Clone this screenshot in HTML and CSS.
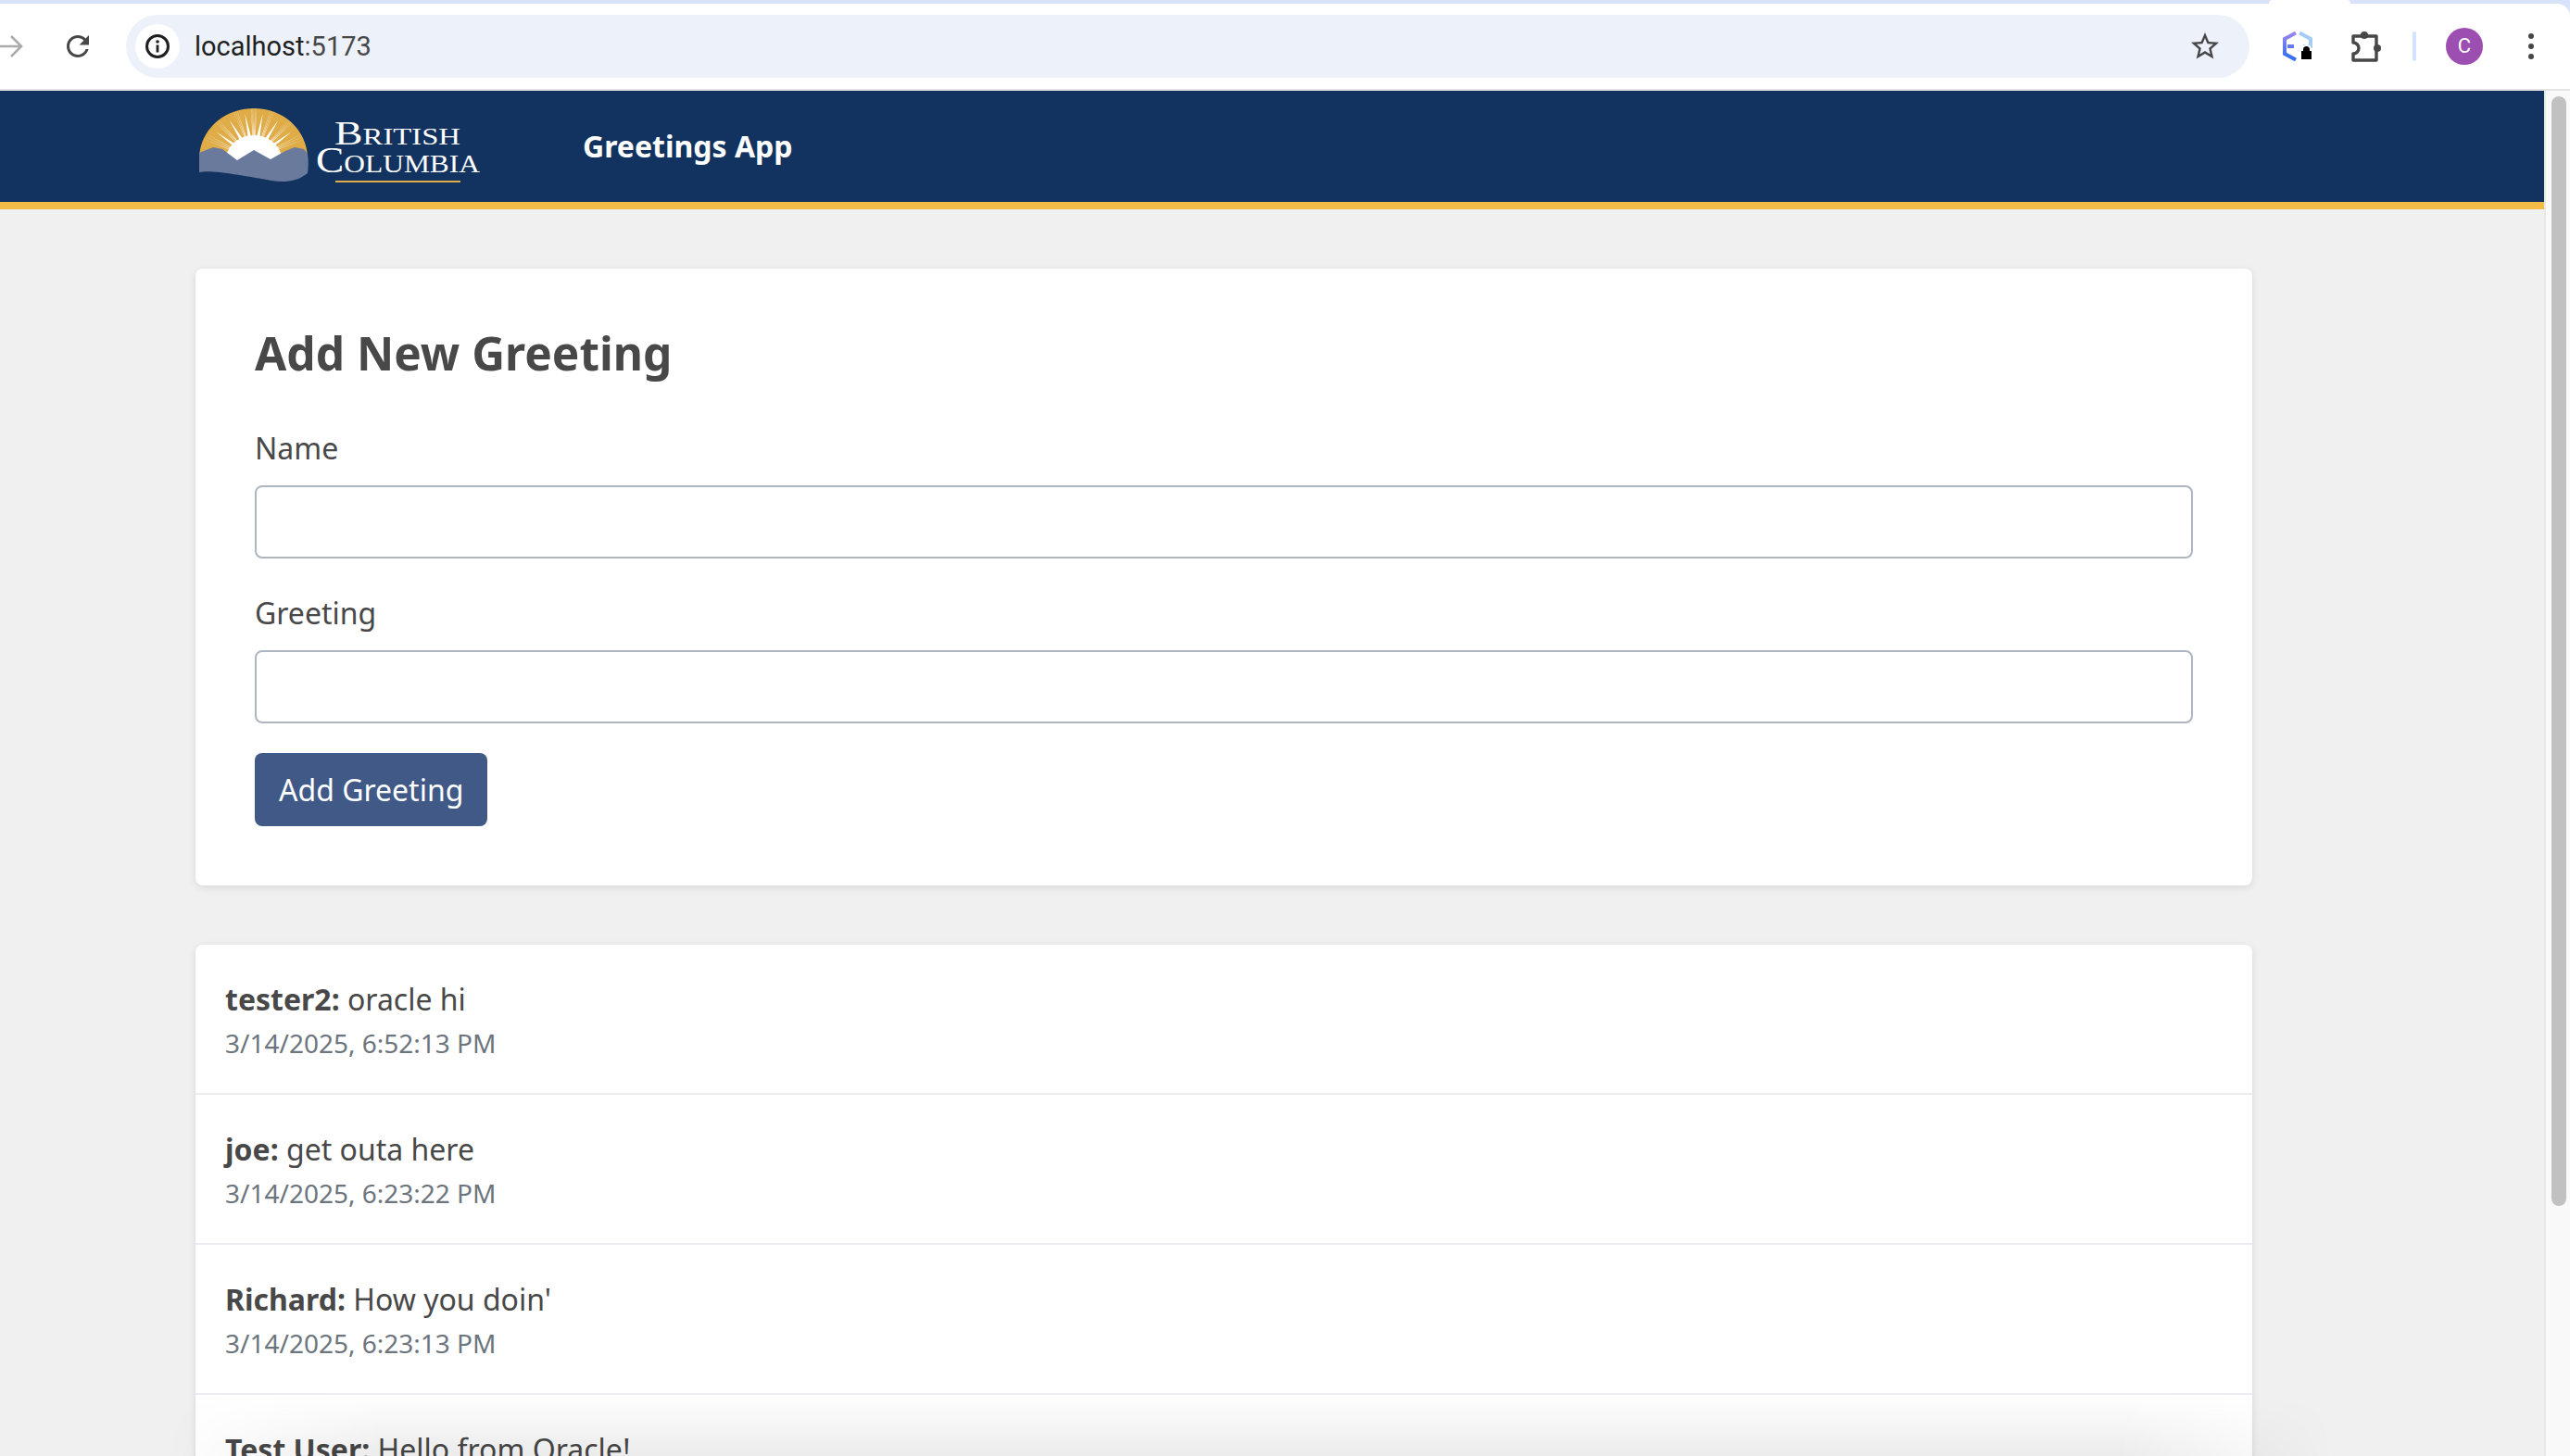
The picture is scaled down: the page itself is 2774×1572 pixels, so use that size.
FILE: index.html
```html
<!DOCTYPE html>
<html lang="en">
<head>
    <meta charset="UTF-8">
    <title>Greetings App</title>
    <link rel="stylesheet" href="styles.css">
</head>
<body>
    <div class="browser">
        <div class="tab-strip"><div class="active-tab"></div></div>
        <div class="toolbar">
            <svg class="forward" width="26" height="28" viewBox="0 0 26 28"><path d="M-6 14H23M12 3l11 11-11 11" fill="none" stroke="#ababab" stroke-width="2.6"/></svg>
            <svg class="reload" width="36" height="36" viewBox="0 0 24 24"><path fill="#474747" d="M17.65 6.35C16.2 4.9 14.21 4 12 4c-4.42 0-7.99 3.58-7.99 8s3.57 8 7.99 8c3.73 0 6.84-2.55 7.73-6h-2.08c-.82 2.33-3.04 4-5.65 4-3.31 0-6-2.69-6-6s2.69-6 6-6c1.66 0 3.14.69 4.22 1.78L13 11h7V4l-2.35 2.35z"/></svg>
            <div class="address-bar">
                <div class="site-chip">
                    <svg width="30" height="30" viewBox="0 0 30 30"><circle cx="15" cy="15" r="11.5" fill="none" stroke="#1f1f1f" stroke-width="3"/><rect x="13.6" y="13.5" width="2.8" height="8" fill="#1f1f1f"/><circle cx="15" cy="10" r="1.8" fill="#1f1f1f"/></svg>
                </div>
                <span class="url">localhost<span class="url-port">:5173</span></span>
                <svg class="star" width="36" height="36" viewBox="0 0 24 24"><path fill="#474747" d="M22 9.24l-7.19-.62L12 2 9.19 8.63 2 9.24l5.46 4.73L5.82 21 12 17.27 18.18 21l-1.63-7.03L22 9.24zM12 15.4l-3.76 2.27 1-4.28-3.32-2.88 4.38-.38L12 6.1l1.71 4.04 4.38.38-3.32 2.88 1 4.28L12 15.4z"/></svg>
            </div>
            <svg class="ext-icon" width="36" height="36" viewBox="0 0 36 36">
                <defs><linearGradient id="extLeft" x1="0" y1="0" x2="0" y2="1"><stop offset="0" stop-color="#9a86f0"/><stop offset="1" stop-color="#2f6cf2"/></linearGradient></defs>
                <path d="M16 3.500L4 10V26L16 32.500M7 18H14" fill="none" stroke="url(#extLeft)" stroke-width="4"/>
                <path d="M20 3.500L32 10V20M24 18H31" fill="none" stroke="#a3cdf5" stroke-width="4"/>
                <path d="M22 21.500a5.500 5.500 0 0 1 11 0v0h2v12H20v-12z" fill="#fff"/>
                <path d="M24 23v-1.500a3.500 3.500 0 0 1 7 0V23h2v9H22v-9z" fill="#000"/>
            </svg>
            <svg class="puzzle" width="36" height="36" viewBox="0 0 36 36">
                <path d="M4 7H29V33H4V26a6 6 0 0 0 0-12Z" fill="none" stroke="#474747" stroke-width="3.400" stroke-linejoin="round"/>
                <circle cx="16" cy="6" r="4" fill="#474747"/><circle cx="30" cy="20" r="4" fill="#474747"/>
            </svg>
            <div class="toolbar-divider"></div>
            <div class="avatar">C</div>
            <svg class="kebab" width="8" height="32" viewBox="0 0 8 32"><circle cx="4" cy="5" r="3" fill="#474747"/><circle cx="4" cy="16" r="3" fill="#474747"/><circle cx="4" cy="27" r="3" fill="#474747"/></svg>
        </div>
    </div>

    <div class="viewport">
        <div class="page">
            <header class="site-header">
                <svg class="bc-logo" width="310" height="90" viewBox="211 113 310 90">
                    <defs>
                        <clipPath id="dome"><path d="M215 170C216 140 242 117 274 117C306 117 331 140 332 170Z"/></clipPath>
                        <path id="hair" d="M273.700 150L274 110L274.300 150Z" fill="#fff"/>
                        <path id="wedge" d="M272 152L274 122L276 152Z" fill="#fff"/>
                    </defs>
                    <path d="M215 170C216 140 242 117 274 117C306 117 331 140 332 170Z" fill="#dfac47"/>
                    <g clip-path="url(#dome)">
                        <use href="#hair" transform="rotate(-3 274 172)"/><use href="#hair" transform="rotate(-1.500 274 172)"/><use href="#hair" transform="rotate(0 274 172)"/><use href="#hair" transform="rotate(1.500 274 172)"/><use href="#hair" transform="rotate(3 274 172)"/>
                        <use href="#wedge" transform="rotate(-11 274 172)"/><use href="#wedge" transform="rotate(11 274 172)"/>
                        <use href="#hair" transform="rotate(-23 274 172)"/><use href="#hair" transform="rotate(-21 274 172)"/><use href="#hair" transform="rotate(-19 274 172)"/><use href="#hair" transform="rotate(19 274 172)"/><use href="#hair" transform="rotate(21 274 172)"/><use href="#hair" transform="rotate(23 274 172)"/>
                        <use href="#wedge" transform="rotate(-32 274 172)"/><use href="#wedge" transform="rotate(32 274 172)"/>
                        <use href="#hair" transform="rotate(-46 274 172)"/><use href="#hair" transform="rotate(-44 274 172)"/><use href="#hair" transform="rotate(-42 274 172)"/><use href="#hair" transform="rotate(42 274 172)"/><use href="#hair" transform="rotate(44 274 172)"/><use href="#hair" transform="rotate(46 274 172)"/>
                        <use href="#wedge" transform="rotate(-54 274 172)"/><use href="#wedge" transform="rotate(54 274 172)"/>
                        <use href="#hair" transform="rotate(-68 274 172)"/><use href="#hair" transform="rotate(-65 274 172)"/><use href="#hair" transform="rotate(-62 274 172)"/><use href="#hair" transform="rotate(62 274 172)"/><use href="#hair" transform="rotate(65 274 172)"/><use href="#hair" transform="rotate(68 274 172)"/>
                    </g>
                    <path d="M243 175A31 29 0 0 1 305 175Z" fill="#fff"/>
                    <path d="M215 165L230 159L240 161L256 173L274 162L292 172L308 163L318 159L328 161L332 166C333 172 333 180 332 187C320 197 305 197 293 195C280 193 262 189 237 186C228 185 220 185 215 186Z" fill="#6a7a9c"/>
                    <text class="logo-word" x="361" y="156" font-size="35" textLength="136" lengthAdjust="spacingAndGlyphs">British</text>
                    <text class="logo-word" x="341" y="186" font-size="39" textLength="177" lengthAdjust="spacingAndGlyphs">Columbia</text>
                    <rect x="362" y="195" width="135" height="2" fill="#dfac47"/>
                </svg>
                <span class="app-title">Greetings App</span>
            </header>

            <main class="content">
                <section class="card form-card">
                    <h2>Add New Greeting</h2>
                    <form>
                        <div class="field">
                            <label for="name">Name</label>
                            <input id="name" type="text">
                        </div>
                        <div class="field">
                            <label for="greeting">Greeting</label>
                            <input id="greeting" type="text">
                        </div>
                        <button type="button">Add Greeting</button>
                    </form>
                </section>

                <section class="card greeting-list">
                    <div class="greeting-row">
                        <div class="greeting-text"><strong>tester2:</strong> oracle hi</div>
                        <div class="greeting-date">3/14/2025, 6:52:13 PM</div>
                    </div>
                    <div class="greeting-row">
                        <div class="greeting-text"><strong>joe:</strong> get outa here</div>
                        <div class="greeting-date">3/14/2025, 6:23:22 PM</div>
                    </div>
                    <div class="greeting-row">
                        <div class="greeting-text"><strong>Richard:</strong> How you doin'</div>
                        <div class="greeting-date">3/14/2025, 6:23:13 PM</div>
                    </div>
                    <div class="greeting-row">
                        <div class="greeting-text"><strong>Test User:</strong> Hello from Oracle!</div>
                        <div class="greeting-date">3/14/2025, 6:20:01 PM</div>
                    </div>
                </section>
            </main>
            <div class="bottom-shade"></div>
        </div>
        <div class="scrollbar"><div class="scroll-thumb"></div></div>
    </div>
</body>
</html>
```

FILE: styles.css
```css
* {
    box-sizing: border-box;
}
html, body {
    margin: 0;
    height: 100%;
}
body {
    display: flex;
    flex-direction: column;
    height: 1572px;
    overflow: hidden;
    background-color: #f0f0f0;
    font-family: "Noto Sans", sans-serif;
    color: #484848;
}

/* browser chrome */
.browser {
    flex: none;
    background-color: #d8e3fb;
    border-bottom: 2px solid #e3e3e3;
}
.tab-strip {
    height: 4px;
    padding-left: 2449px;
}
.active-tab {
    width: 88px;
    height: 4px;
    background-color: #fff;
    border-radius: 6px 6px 0 0;
}
.toolbar {
    display: flex;
    align-items: center;
    height: 92px;
    background-color: #fff;
    border-top-right-radius: 14px;
}
.forward {
    flex: none;
    margin-right: 40px;
}
.reload {
    flex: none;
    margin-right: 34px;
}
.address-bar {
    display: flex;
    align-items: center;
    width: 2292px;
    height: 68px;
    padding: 0 30px 0 10px;
    background-color: #edf2fa;
    border-radius: 34px;
}
.site-chip {
    display: flex;
    align-items: center;
    justify-content: center;
    width: 48px;
    height: 48px;
    background-color: #fff;
    border-radius: 24px;
}
.url {
    margin-left: 16px;
    font-family: Roboto, sans-serif;
    font-size: 29px;
    color: #1f1f1f;
}
.url-port {
    color: #474747;
}
.star {
    margin-left: auto;
}
.ext-icon {
    flex: none;
    margin-left: 34px;
}
.puzzle {
    flex: none;
    margin-left: 38px;
}
.toolbar-divider {
    flex: none;
    width: 4px;
    height: 32px;
    margin-left: 32px;
    background-color: #d3e3fd;
    border-radius: 2px;
}
.avatar {
    flex: none;
    width: 40px;
    height: 40px;
    margin-left: 32px;
    background-color: #9c4fb0;
    border-radius: 50%;
    color: #fff;
    font-family: Roboto, sans-serif;
    font-size: 22px;
    line-height: 40px;
    text-align: center;
}
.kebab {
    flex: none;
    margin-left: 48px;
}

/* page viewport */
.viewport {
    flex: 1;
    display: flex;
    min-height: 0;
}
.page {
    position: relative;
    flex: 1;
    min-width: 0;
    overflow: hidden;
}
.scrollbar {
    flex: none;
    width: 28px;
    padding: 6px 4px 0 6px;
    background-color: #f9f9f9;
    border-left: 2px solid #e8e8e8;
}
.scroll-thumb {
    height: 1198px;
    background-color: #c1c1c1;
    border-radius: 8px;
}

/* site header */
.site-header {
    display: flex;
    align-items: center;
    height: 128px;
    padding-left: 211px;
    background-color: #12325f;
    border-bottom: 8px solid #f2bc47;
}
.bc-logo {
    flex: none;
}
.logo-word {
    font-family: "Liberation Serif", serif;
    font-variant: small-caps;
    fill: #fff;
}
.app-title {
    margin: 0 0 2px 108px;
    font-size: 32px;
    font-weight: 700;
    color: #fff;
}

/* content */
.content {
    width: 2431px;
    padding: 64px 0 0 211px;
}
.card {
    background-color: #fff;
    border-radius: 8px;
    box-shadow: 0 2px 8px rgba(0, 0, 0, 0.1);
}
.form-card {
    padding: 64px;
    margin-bottom: 64px;
}
h2 {
    margin: 0 0 51px;
    font-size: 49.6px;
    line-height: 54px;
    font-weight: 700;
}
.field {
    margin-bottom: 34px;
}
.field:last-of-type {
    margin-bottom: 32px;
}
label {
    display: block;
    margin-bottom: 15px;
    font-size: 32px;
    line-height: 50px;
}
input {
    display: block;
    width: 100%;
    height: 79px;
    background-color: #fff;
    border: 2px solid #aeb5c1;
    border-radius: 8px;
}
button {
    display: block;
    height: 79px;
    padding: 0 26px;
    background-color: #405986;
    border: none;
    border-radius: 8px;
    color: #fff;
    font-family: inherit;
    font-size: 32px;
}
.greeting-row {
    padding: 34px 32px 34px;
    border-bottom: 2px solid #ebebf0;
}
.greeting-text {
    margin-bottom: 2px;
    font-size: 32px;
    line-height: 50px;
}
.greeting-date {
    font-size: 28px;
    line-height: 40px;
    color: #6c757d;
}
.bottom-shade {
    position: absolute;
    left: 180px;
    bottom: 0;
    width: 2340px;
    height: 66px;
    background: linear-gradient(to bottom, transparent, rgba(0, 0, 0, 0.08));
    -webkit-mask-image: linear-gradient(to right, transparent, #000 10%, #000 90%, transparent);
    mask-image: linear-gradient(to right, transparent, #000 10%, #000 90%, transparent);
    pointer-events: none;
}
```
